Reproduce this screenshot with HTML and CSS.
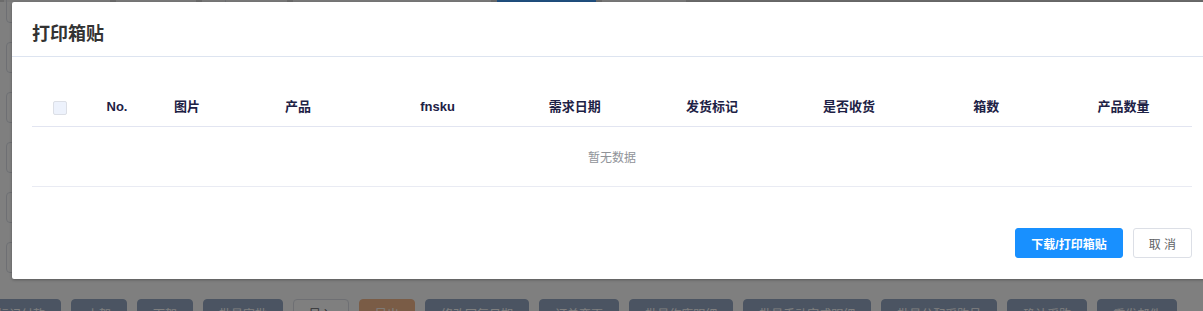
FILE: index.html
```html
<!DOCTYPE html>
<html>
	<head>
		<meta charset="UTF-8">
		<title>打印箱贴</title>
		<link rel="stylesheet" href="styles.css">
	</head>
	<body>
		<div class="page">
			<div class="topTabs">
				<span class="tab" style="width:106px"></span>
				<span class="tab" style="width:80px"></span>
				<span class="tab" style="width:85px"></span>
				<span class="tab" style="width:198px"></span>
				<span class="tab active" style="width:99px"></span>
				<span class="tab" style="width:84px"></span>
			</div>
			<div class="formCol">
				<div class="field"></div>
				<div class="field"></div>
				<div class="field"></div>
				<div class="field"></div>
				<div class="field"></div>
				<div class="field"></div>
			</div>
			<div class="toolbar">
				<button class="btn slate">标记付款</button>
				<button class="btn slate">上架</button>
				<button class="btn slate">下架</button>
				<button class="btn slate">批量审批</button>
				<button class="btn plain">导入</button>
				<button class="btn warm">导出</button>
				<button class="btn slate">修改回复日期</button>
				<button class="btn slate">订单变更</button>
				<button class="btn slate">批量作废明细</button>
				<button class="btn slate">批量手动完成明细</button>
				<button class="btn slate">批量分配采购号</button>
				<button class="btn slate">确认采购</button>
				<button class="btn slate">重发邮件</button>
			</div>
		</div>

		<div class="mask"></div>

		<div class="dialog">
			<div class="dialogHeader">
				<span class="dialogTitle">打印箱贴</span>
			</div>
			<div class="dialogBody">
				<table class="boxTable">
					<colgroup>
						<col style="width:55px">
						<col style="width:60px">
						<col style="width:80px">
						<col style="width:142px">
						<col><col><col><col><col><col>
					</colgroup>
					<thead>
						<tr>
							<th><span class="checkbox"></span></th>
							<th>No.</th>
							<th>图片</th>
							<th>产品</th>
							<th>fnsku</th>
							<th>需求日期</th>
							<th>发货标记</th>
							<th>是否收货</th>
							<th>箱数</th>
							<th>产品数量</th>
						</tr>
					</thead>
					<tbody>
						<tr>
							<td class="empty" colspan="10">暂无数据</td>
						</tr>
					</tbody>
				</table>
			</div>
			<div class="dialogFooter">
				<button class="dlgBtn primary">下载/打印箱贴</button>
				<button class="dlgBtn">取 消</button>
			</div>
		</div>
	</body>
</html>
```

FILE: styles.css
```css
*,
*::before,
*::after{
	box-sizing: border-box;
}
html,body{
	margin: 0;
	padding: 0;
}
body{
	width: 1203px;
	height: 311px;
	overflow: hidden;
	position: relative;
	background: #fff;
	font-family: "Helvetica Neue", "Liberation Sans", "Noto Sans CJK SC", sans-serif;
}
.page{
	height: 311px;
	display: flex;
	flex-direction: column;
}
.topTabs{
	height: 2px;
	display: flex;
	gap: 6px;
	padding-left: 4px;
	background: #d6d6d6;
	flex-shrink: 0;
}
.topTabs .tab{
	height: 2px;
	background: #f2f2f2;
}
.topTabs .tab.active{
	background: #409eff;
}
.formCol{
	display: flex;
	flex-direction: column;
	gap: 19px;
	margin-top: -10px;
	padding-left: 6px;
	flex-shrink: 0;
}
.formCol .field{
	width: 220px;
	height: 31px;
	border: 1px solid #dcdfe6;
	border-radius: 4px;
}
.toolbar{
	display: flex;
	gap: 10px;
	margin-top: 26px;
	margin-left: -19px;
	flex-shrink: 0;
}
.btn{
	height: 28px;
	padding: 0 15px;
	font-size: 12px;
	font-family: inherit;
	border: 1px solid transparent;
	border-radius: 4px;
	color: #fff;
	white-space: nowrap;
}
.btn.slate{
	background: #97a9c4;
	border-color: #97a9c4;
}
.btn.warm{
	background: #f4b98d;
	border-color: #f4b98d;
}
.btn.plain{
	background: #fff;
	border-color: #dcdfe6;
	color: #606266;
}
.mask{
	position: absolute;
	left: 0;
	top: 0;
	right: 0;
	bottom: 0;
	background: rgba(0,0,0,.5);
}
.dialog{
	position: absolute;
	left: 12px;
	top: 2px;
	width: 1200px;
	background: #fff;
	border-radius: 2px;
	box-shadow: 0 1px 3px rgba(0,0,0,.3);
}
.dialogHeader{
	padding: 20px 20px 10px;
	border-bottom: 1px solid #dde4f0;
}
.dialogTitle{
	display: block;
	font-size: 18px;
	line-height: 24px;
	font-weight: bold;
	color: #333;
}
.dialogBody{
	padding: 30px 20px;
}
.boxTable{
	width: 100%;
	border-collapse: collapse;
	table-layout: fixed;
}
.boxTable th{
	padding: 8px 0;
	line-height: 23px;
	font-size: 13px;
	font-weight: bold;
	color: #1d2145;
	text-align: center;
	border-bottom: 1px solid #e2e5f1;
}
.boxTable .checkbox{
	display: inline-block;
	width: 14px;
	height: 14px;
	vertical-align: middle;
	background: #edf2fc;
	border: 1px solid #dcdfe6;
	border-radius: 2px;
}
.boxTable .empty{
	height: 60px;
	text-align: center;
	font-size: 12px;
	color: #909399;
	border-bottom: 1px solid #e9ebf3;
}
.dialogFooter{
	padding: 11px 20px 21px;
	display: flex;
	justify-content: flex-end;
	gap: 10px;
}
.dlgBtn{
	height: 30px;
	padding: 0 15px;
	font-size: 12px;
	font-family: inherit;
	background: #fff;
	border: 1px solid #dcdfe6;
	border-radius: 3px;
	color: #606266;
	cursor: pointer;
}
.dlgBtn.primary{
	background: #1890ff;
	border-color: #1890ff;
	color: #fff;
	font-weight: bold;
}
```
